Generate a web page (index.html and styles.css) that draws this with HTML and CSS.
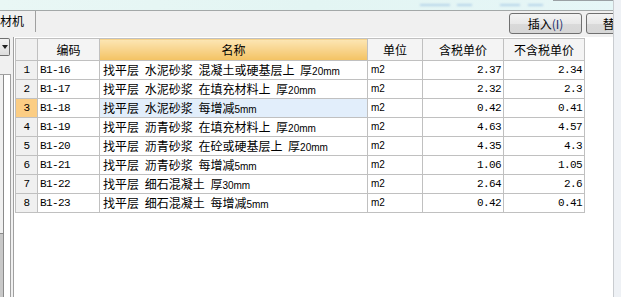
FILE: index.html
```html
<!DOCTYPE html>
<html lang="zh">
<head>
<meta charset="utf-8">
<title>材机</title>
<link rel="stylesheet" href="styles.css">
</head>
<body>
<div class="page">
  <div class="top"><span class="blur b1"></span><span class="blur b2"></span><span class="blur b3"></span><span class="blur b4"></span><span class="topline"></span></div>
  <div class="toolbar">
    <div class="tab">材机</div>
    <div class="tools">
      <button class="btn">插入<span class="acc">(I)</span></button>
      <button class="btn">替换<span class="acc">(R)</span></button>
    </div>
  </div>
  <div class="main">
    <div class="side">
      <div class="dd"><span class="arrow"></span></div>
      <div class="sidebox"><div class="sb"><div class="thumb"></div></div></div>
    </div>
    <div class="wrap">
      <table class="grid">
        <colgroup>
          <col class="c-rn"><col class="c-code"><col class="c-name"><col class="c-unit"><col class="c-p"><col class="c-p">
        </colgroup>
        <thead>
          <tr><th class="rn"></th><th>编码</th><th class="sorted">名称</th><th>单位</th><th>含税单价</th><th>不含税单价</th></tr>
        </thead>
        <tbody>
          <tr><td class="rn">1</td><td class="code">B1-16</td><td class="name">找平层 水泥砂浆 混凝土或硬基层上 厚<span class="l">20mm</span></td><td class="unit">m2</td><td class="num">2.37</td><td class="num">2.34</td></tr>
          <tr><td class="rn">2</td><td class="code">B1-17</td><td class="name">找平层 水泥砂浆 在填充材料上 厚<span class="l">20mm</span></td><td class="unit">m2</td><td class="num">2.32</td><td class="num">2.3</td></tr>
          <tr class="sel"><td class="rn">3</td><td class="code">B1-18</td><td class="name">找平层 水泥砂浆 每增减<span class="l">5mm</span></td><td class="unit">m2</td><td class="num">0.42</td><td class="num">0.41</td></tr>
          <tr><td class="rn">4</td><td class="code">B1-19</td><td class="name">找平层 沥青砂浆 在填充材料上 厚<span class="l">20mm</span></td><td class="unit">m2</td><td class="num">4.63</td><td class="num">4.57</td></tr>
          <tr><td class="rn">5</td><td class="code">B1-20</td><td class="name">找平层 沥青砂浆 在砼或硬基层上 厚<span class="l">20mm</span></td><td class="unit">m2</td><td class="num">4.35</td><td class="num">4.3</td></tr>
          <tr><td class="rn">6</td><td class="code">B1-21</td><td class="name">找平层 沥青砂浆 每增减<span class="l">5mm</span></td><td class="unit">m2</td><td class="num">1.06</td><td class="num">1.05</td></tr>
          <tr><td class="rn">7</td><td class="code">B1-22</td><td class="name">找平层 细石混凝土 厚<span class="l">30mm</span></td><td class="unit">m2</td><td class="num">2.64</td><td class="num">2.6</td></tr>
          <tr><td class="rn">8</td><td class="code">B1-23</td><td class="name">找平层 细石混凝土 每增减<span class="l">5mm</span></td><td class="unit">m2</td><td class="num">0.42</td><td class="num">0.41</td></tr>
        </tbody>
      </table>
    </div>
  </div>
  <div class="edge"></div>
</div>
</body>
</html>
```

FILE: styles.css
```css
html, body {
  margin: 0;
  padding: 0;
}
body {
  background: #f0f0f0;
  font-family: "Noto Sans CJK SC", "Liberation Sans", sans-serif;
  font-size: 12px;
  color: #000;
}
.page {
  position: relative;
  width: 621px;
  height: 297px;
  overflow: hidden;
  display: flex;
  flex-direction: column;
}
.top {
  position: relative;
  height: 10px;
  flex: none;
  background: linear-gradient(to right, #e9f7f5, #e3f5f3 50%, #e6f6f7);
  border-bottom: 1px solid #a3a8a8;
}
.blur {
  position: absolute;
  top: 4px;
  height: 2px;
  background: #b6d4ea;
  filter: blur(1px);
}
.b1 { left: 420px; width: 30px; }
.b2 { left: 457px; width: 15px; }
.b3 { left: 500px; width: 20px; }
.b4 { left: 528px; width: 15px; }
.topline {
  position: absolute;
  top: 0;
  left: 553px;
  right: 0;
  height: 1px;
  background: #9aa0a4;
}
.toolbar {
  height: 26px;
  flex: none;
  display: flex;
  align-items: flex-start;
  overflow: hidden;
}
.tab {
  flex: none;
  width: 35px;
  height: 21px;
  border-right: 1px solid #a0a0a0;
  line-height: 20px;
  font-size: 12px;
  white-space: nowrap;
}
.tools {
  display: flex;
  gap: 4px;
  margin-left: 473px;
  padding-top: 2px;
  flex: none;
}
.btn {
  width: 73px;
  height: 21px;
  flex: none;
  margin: 0;
  padding: 0;
  border: 1px solid #707070;
  border-radius: 3px;
  background: linear-gradient(#f3f3f3, #e8e8e8 50%, #dadada 51%, #d6d6d6);
  font-family: "Noto Sans CJK SC", sans-serif;
  font-size: 12px;
  line-height: 19px;
  color: #000;
  text-align: center;
}
.acc {
  color: #1c2f6a;
}
.main {
  flex: 1;
  display: flex;
  min-height: 0;
}
.side {
  width: 13px;
  flex: none;
  display: flex;
  flex-direction: column;
}
.dd {
  margin-top: 1px;
  width: 9px;
  height: 16px;
  border: 1px solid #707070;
  border-left: none;
  border-radius: 0 2px 2px 0;
  background: linear-gradient(#f2f2f2, #dcdcdc);
  display: flex;
  align-items: center;
  justify-content: center;
}
.arrow {
  width: 0;
  height: 0;
  border-left: 3px solid transparent;
  border-right: 3px solid transparent;
  border-top: 4px solid #202020;
}
.sidebox {
  margin-top: 18px;
  width: 10px;
  flex: 1;
  background: #fff;
  border-top: 1px solid #a0a0a0;
  border-right: 1px solid #a0a0a0;
  display: flex;
}
.sb {
  width: 3px;
  border-right: 1px solid #8a8a8a;
  background: #f0f0f0;
  display: flex;
  flex-direction: column;
  justify-content: flex-end;
}
.thumb {
  height: 63px;
  background: #c8c8c8;
  border-top: 1px solid #8a8a8a;
}
.wrap {
  flex: 1;
  background: #fff;
  border-left: 1px solid #a0a0a0;
  padding: 1px 0 0 1px;
}
.grid {
  border-collapse: collapse;
  table-layout: fixed;
  width: 570px;
}
.c-rn { width: 22px; }
.c-code { width: 62px; }
.c-name { width: 268px; }
.c-unit { width: 55px; }
.c-p { width: 81px; }
.grid th,
.grid td {
  border: 1px solid #c0c0c0;
  padding: 0 3px;
  white-space: nowrap;
  overflow: hidden;
  vertical-align: middle;
}
.grid thead tr {
  height: 22px;
}
.grid th {
  background: #f4f4f4;
  font-weight: normal;
  text-align: center;
  font-size: 12px;
  line-height: 14px;
}
.grid th.rn {
  background: #f0f0f0;
}
.grid th.sorted {
  background: linear-gradient(#fce6b4, #f8d48c 50%, #f3c262);
}
.grid tbody tr {
  height: 19px;
}
.grid td {
  font-size: 12px;
  line-height: 14px;
}
.grid td.rn {
  background: #f0f0f0;
  text-align: center;
  padding: 0;
}
.grid td.rn, .grid td.code, .grid td.num {
  font-family: "Liberation Mono", monospace;
  font-size: 11px;
  letter-spacing: -0.6px;
}
.grid td.code {
  padding-left: 2px;
}
.grid td.name {
  word-spacing: 3px;
}
.l, .grid td.unit {
  font-family: "Liberation Sans", sans-serif;
  font-size: 10px;
  line-height: 10px;
  letter-spacing: 0;
  word-spacing: 0;
}
.grid td.num {
  text-align: right;
  padding-right: 2px;
}
.grid tr.sel td.rn {
  background: #fbcd84;
}
.grid tr.sel td.name {
  background: #e2eefb;
}
.edge {
  position: absolute;
  top: 0;
  right: 0;
  bottom: 0;
  width: 7px;
  background: #eef1f5;
  border-left: 1px solid #c9ccd0;
}
```
